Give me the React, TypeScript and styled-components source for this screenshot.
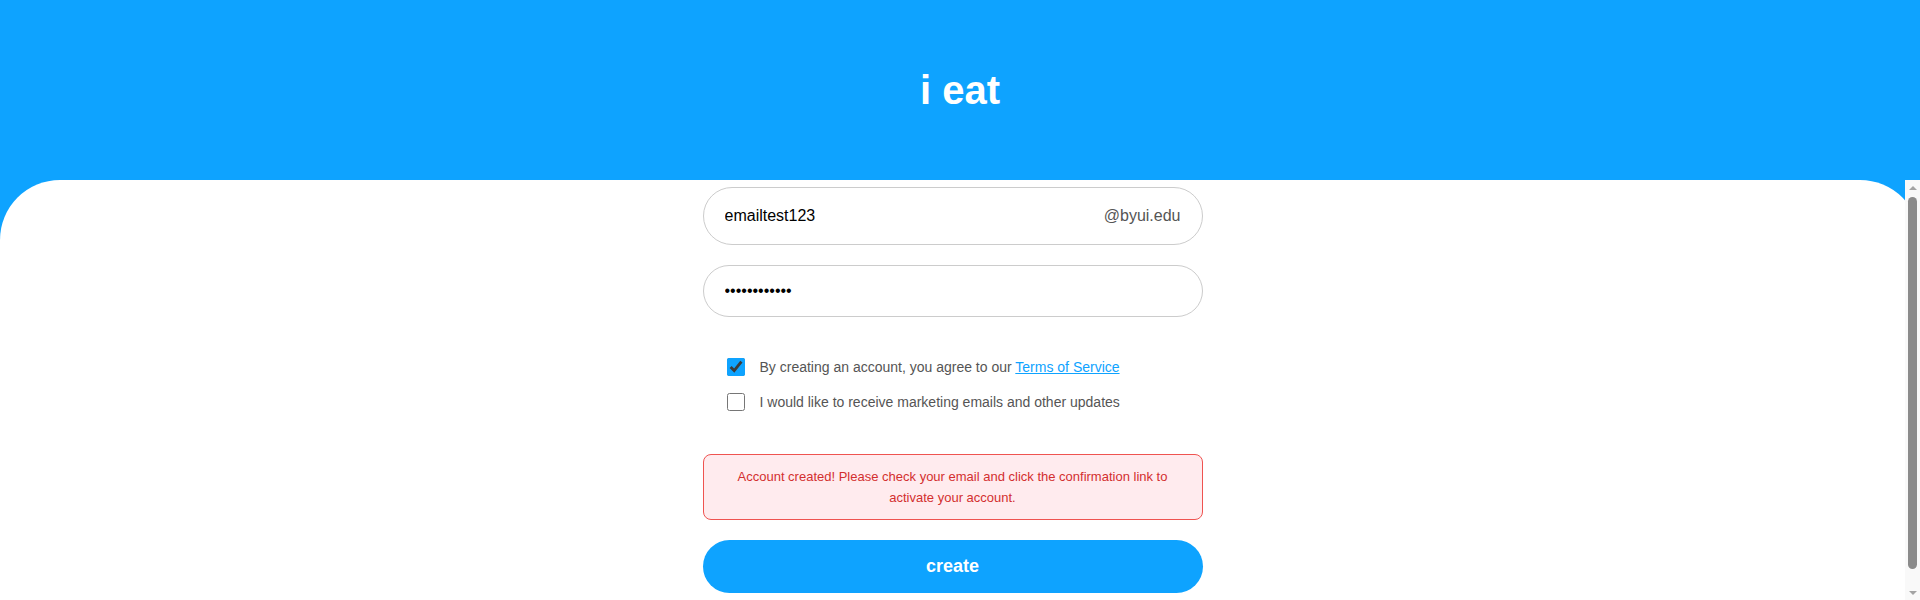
import React from "react";
import styled, { createGlobalStyle } from "styled-components";

const BLUE = "#0ea3ff";

const GlobalStyle = createGlobalStyle`
  html, body {
    margin: 0;
    padding: 0;
    height: 100%;
    overflow: hidden;
    background: ${BLUE};
    font-family: "Liberation Sans", Arial, sans-serif;
  }
  #root { height: 100%; }
  * { box-sizing: border-box; }
`;

const Page = styled.div`
  height: 100vh;
  display: flex;
  flex-direction: column;
  background: ${BLUE};
  overflow: hidden;
`;

const Header = styled.header`
  height: 180px;
  flex: 0 0 180px;
  display: flex;
  align-items: center;
  justify-content: center;
`;

const Title = styled.h1`
  margin: 0;
  color: #ffffff;
  font-size: 40px;
  font-weight: 700;
`;

const Panel = styled.main`
  position: relative;
  flex: 1;
  min-height: 0;
  background: #ffffff;
  border-radius: 60px 60px 0 0;
  padding-right: 15px;
`;

const ScrollBar = styled.div`
  position: absolute;
  top: 0;
  right: 0;
  bottom: 0;
  width: 15px;
  background: #f9f9f9;
  display: flex;
  flex-direction: column;
  align-items: center;
`;

const Arrow = styled.div<{ $down?: boolean }>`
  flex: 0 0 15px;
  width: 15px;
  display: flex;
  align-items: center;
  justify-content: center;
  &::before {
    content: "";
    width: 0;
    height: 0;
    border-left: 4px solid transparent;
    border-right: 4px solid transparent;
    ${(p) =>
      p.$down
        ? "border-top: 4px solid #a3a3a3;"
        : "border-bottom: 4px solid #a3a3a3;"}
  }
`;

const Thumb = styled.div`
  width: 9px;
  height: 372px;
  margin-top: 2px;
  border-radius: 5px;
  background: #8b8b8b;
`;

const TrackSpace = styled.div`
  flex: 1;
  display: flex;
  flex-direction: column;
  align-items: center;
`;

const Form = styled.form`
  width: 500px;
  margin: 0 auto;
  padding: 7px 0 26px;
  display: flex;
  flex-direction: column;
`;

const Field = styled.div<{ $h: number; $mt?: number }>`
  height: ${(p) => p.$h}px;
  margin-top: ${(p) => p.$mt ?? 0}px;
  border: 1px solid #cccccc;
  border-radius: 30px;
  display: flex;
  align-items: center;
  padding: 0 21px;
  background: #fff;
`;

const TextInput = styled.input`
  flex: 1;
  min-width: 0;
  border: none;
  outline: none;
  background: transparent;
  padding: 0;
  font-family: "Liberation Sans", Arial, sans-serif;
  font-size: 16px;
  color: #000;
`;

const Suffix = styled.span`
  font-size: 16px;
  color: #555;
`;

const Checks = styled.div`
  margin-top: 41px;
  padding-left: 24px;
  display: flex;
  flex-direction: column;
  gap: 17px;
`;

const CheckRow = styled.label`
  display: flex;
  align-items: center;
  gap: 15px;
  font-size: 14px;
  color: #555;
  height: 18px;
`;

const Box = styled.input`
  width: 18px;
  height: 18px;
  margin: 0;
  accent-color: ${BLUE};
`;

const Link = styled.a`
  color: ${BLUE};
  text-decoration: underline;
`;

const Alert = styled.div`
  margin-top: 43px;
  border: 1px solid #ef5350;
  background: #ffebee;
  color: #d32f2f;
  border-radius: 8px;
  padding: 12px 16px 10px;
  font-size: 13px;
  line-height: 1.6;
  text-align: center;
`;

const Button = styled.button`
  margin-top: 20px;
  height: 53px;
  border: none;
  border-radius: 27px;
  background: ${BLUE};
  color: #fff;
  font-family: "Liberation Sans", Arial, sans-serif;
  font-size: 18px;
  font-weight: 700;
`;

export default function App() {
  return (
    <>
      <GlobalStyle />
      <Page>
        <Header>
          <Title>i eat</Title>
        </Header>
        <Panel>
          <Form onSubmit={(e) => e.preventDefault()}>
            <Field $h={58}>
              <TextInput type="text" defaultValue="emailtest123" />
              <Suffix>@byui.edu</Suffix>
            </Field>
            <Field $h={52} $mt={20}>
              <TextInput type="password" defaultValue="password1234" />
            </Field>
            <Checks>
              <CheckRow>
                <Box type="checkbox" defaultChecked />
                <span>
                  By creating an account, you agree to our{" "}
                  <Link href="#">Terms of Service</Link>
                </span>
              </CheckRow>
              <CheckRow>
                <Box type="checkbox" />
                <span>I would like to receive marketing emails and other updates</span>
              </CheckRow>
            </Checks>
            <Alert>
              Account created! Please check your email and click the confirmation link to
              activate your account.
            </Alert>
            <Button type="submit">create</Button>
          </Form>
          <ScrollBar aria-hidden="true">
            <Arrow />
            <TrackSpace>
              <Thumb />
            </TrackSpace>
            <Arrow $down />
          </ScrollBar>
        </Panel>
      </Page>
    </>
  );
}
